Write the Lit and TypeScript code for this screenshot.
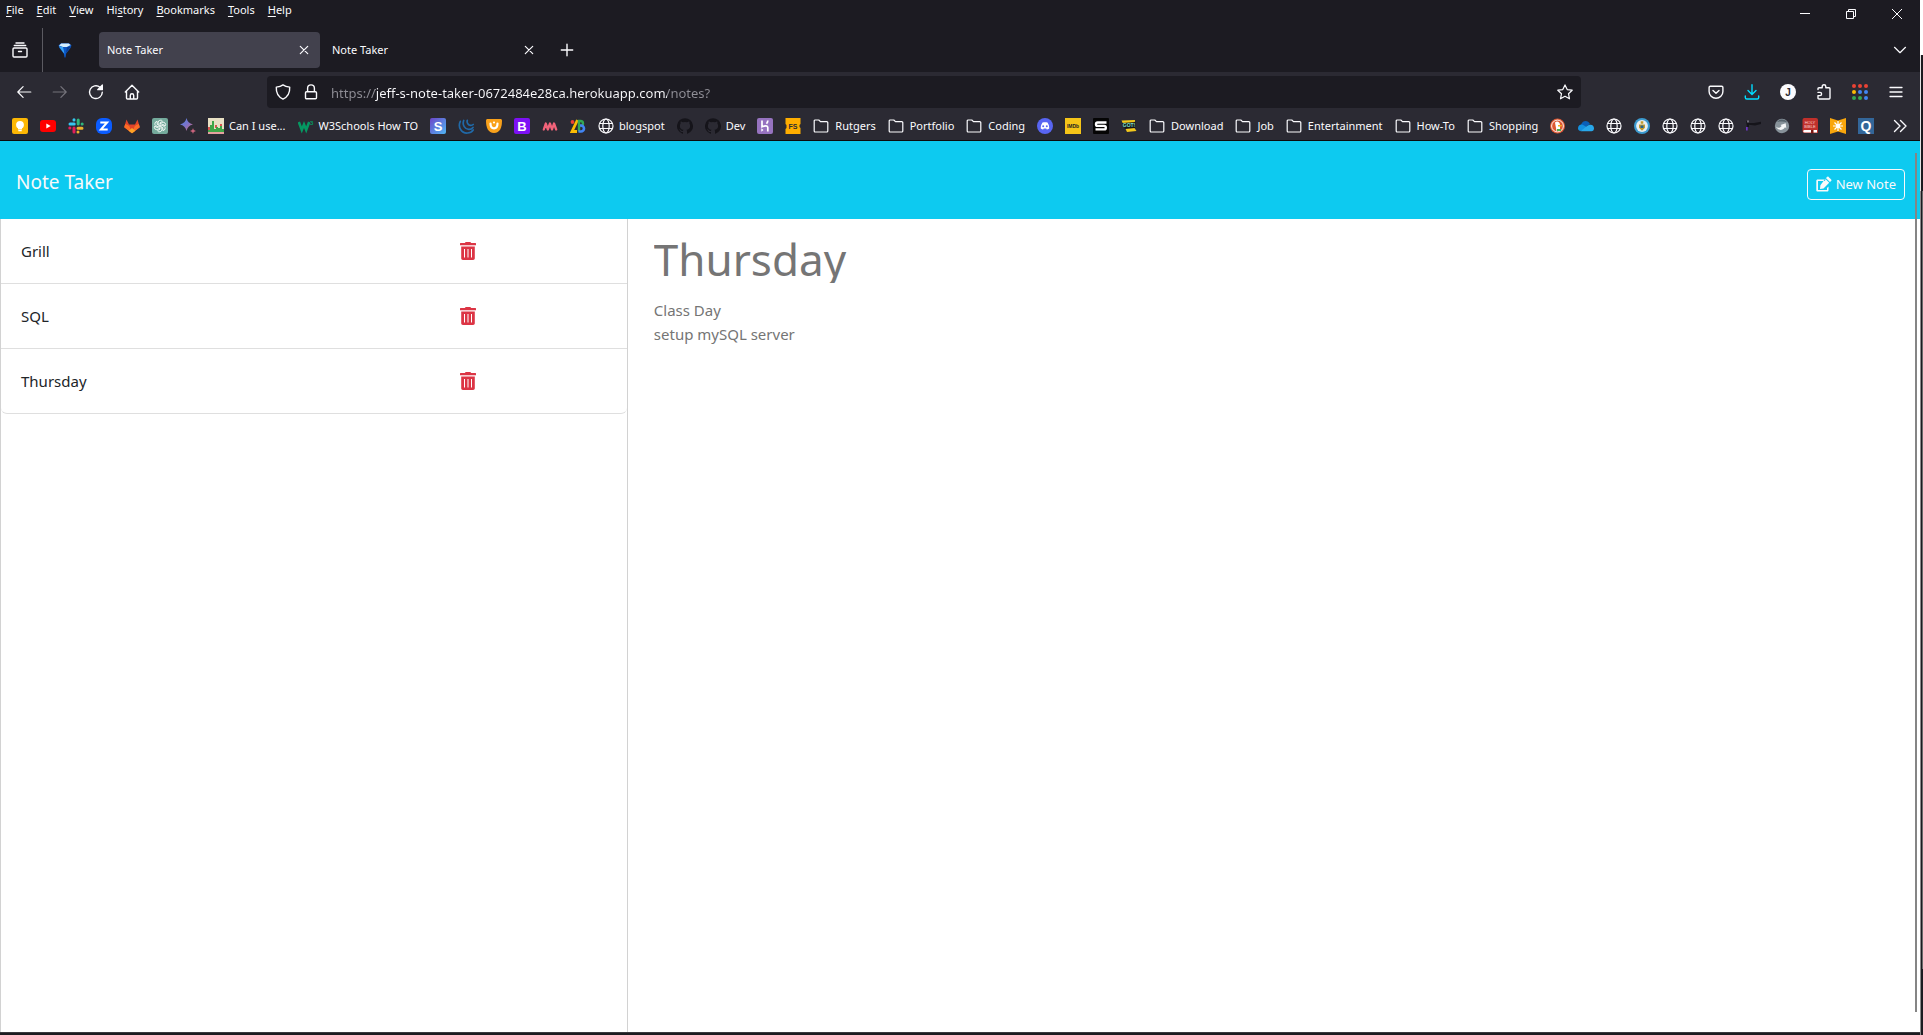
import { LitElement, html, svg, css, nothing, type TemplateResult } from "lit";
import { customElement, state } from "lit/decorators.js";

/** Glyphs on a 16 by 16 grid. Stroked shapes inherit the text colour. */
const line = (body: TemplateResult) =>
  svg`<g fill="none" stroke="currentColor" stroke-width="1.2" stroke-linecap="round" stroke-linejoin="round">${body}</g>`;

const mark = (label: string, size: number, fill: string, y = 12, weight = 700) =>
  svg`<text x="8" y=${y} text-anchor="middle" font-size=${size} font-weight=${weight} fill=${fill}>${label}</text>`;

const github = svg`<path fill="#15141a" d="M8 .2a8 8 0 0 0-2.500 15.600c.4.100.5-.2.500-.4v-1.400c-2.200.5-2.700-1-2.700-1-.4-.9-.9-1.200-.9-1.200-.7-.5.100-.5.100-.5.800.100 1.200.8 1.200.8.7 1.200 1.900.9 2.300.7.100-.5.300-.9.500-1.100-1.800-.2-3.600-.9-3.600-4 0-.9.300-1.600.8-2.100-.1-.2-.4-1 .1-2.100 0 0 .7-.2 2.200.8a7.500 7.500 0 0 1 4 0c1.500-1 2.200-.8 2.200-.8.5 1.100.2 1.900.1 2.100.5.600.8 1.300.8 2.100 0 3.100-1.900 3.800-3.700 4 .3.200.6.700.6 1.500v2.200c0 .2.100.500.500.400A8 8 0 0 0 8 .2z"/>`;

const icons: Record<string, TemplateResult> = {
  archive: line(svg`<path d="M4 1h8M2.300 3.500h11.400M2 6h12a1 1 0 0 1 1 1v7a1 1 0 0 1-1 1H2a1 1 0 0 1-1-1V7a1 1 0 0 1 1-1zM6.500 9.500h3" stroke-width="1.400"/>`),
  gem: svg`<path fill="#0b56c4" d="M1.500 3.500 4 1.300h8l2.500 2.200L13.500 6 9.200 11.500 8.500 15.500h-1L6.800 11.500 2.500 6z"/><path fill="#d5efff" d="M2 3.500 4.300 1.500h7.400l2 1.500L10 5H6z"/><path fill="#3ba6f5" d="M1.800 4.200 6 5l1.500 7L3 6z"/><path fill="#0a3d94" d="m10 5 3.800-.6L9 11z"/>`,
  close: line(svg`<path d="m4.300 4.300 7.400 7.400m0-7.400-7.400 7.400"/>`),
  plus: line(svg`<path d="M8 2.300v11.400M2.300 8h11.400" stroke-width="1.400"/>`),
  chevron: line(svg`<path d="m2.500 5.300 5.500 5.400 5.500-5.400"/>`),
  back: line(svg`<path d="M14.800 8H1.800m5.300-5.300L1.800 8l5.300 5.300"/>`),
  forward: line(svg`<path d="M1.200 8h13M8.900 2.700 14.200 8l-5.300 5.300"/>`),
  reload: line(svg`<path d="M14.300 8.300A6.400 6.400 0 1 1 12 3.200l2 1.800" stroke-width="1.400"/><path fill="currentColor" d="M14.400 1v4.700H9.700z"/>`),
  home: line(svg`<path d="M1.300 8 8 1.300 14.700 8M2.500 7v7a1 1 0 0 0 1 1h9a1 1 0 0 0 1-1V7M6.300 15v-3.500a1.700 1.700 0 0 1 3.400 0V15" stroke-width="1.400"/>`),
  shield: line(svg`<path d="M8 .9c2 1.500 4.300 2 6.700 2.200.3 5-1.700 9.600-6.700 12-5-2.400-7-7-6.700-12C3.700 2.900 6 2.400 8 .9z" stroke-width="1.400"/>`),
  lock: line(svg`<path d="M3.500 7.800h9a1 1 0 0 1 1 1v5a1 1 0 0 1-1 1h-9a1 1 0 0 1-1-1v-5a1 1 0 0 1 1-1zM4.600 7.500V4.300a3.400 3.400 0 0 1 6.800 0v3.200" stroke-width="1.400"/>`),
  star: line(svg`<path d="m8 .9 2.200 4.700 5 .6-3.700 3.500 1 5.100L8 12.300l-4.500 2.500 1-5.100L.8 6.200l5-.6z"/>`),
  pocket: line(svg`<path d="M2.300 2.200h11.400c.7 0 1.200.5 1.200 1.200v4a6.900 6.900 0 0 1-13.800 0v-4c0-.7.500-1.200 1.200-1.200zM5 6.500l3 2.800 3-2.800" stroke-width="1.400"/>`),
  download: svg`<g fill="none" stroke="#00ddff" stroke-width="1.400" stroke-linecap="round" stroke-linejoin="round"><path d="M8 .8v9.600M4 6.600l4 4 4-4M1.300 12v1.500c0 .8.700 1.500 1.500 1.500h10.400c.8 0 1.500-.7 1.500-1.500V12"/></g>`,
  account: svg`<circle cx="8" cy="8" r="8" fill="#fbfbfe"/>${mark("J", 10, "#2b2a33", 11.5)}`,
  puzzle: line(svg`<path d="M2 5.500V4.700c0-.6.400-1 1-1h3.200V2.500a1.800 1.800 0 0 1 3.600 0v1.200H13c.6 0 1 .4 1 1V14c0 .6-.4 1-1 1H3c-.6 0-1-.4-1-1v-2.400h2a1.600 1.600 0 0 0 0-3.200H2" stroke-width="1.400"/>`),
  apps: svg`${[
    ["#ea4335", "#ea4335", "#ea4335"],
    ["#fbbc04", "#4285f4", "#4285f4"],
    ["#34a853", "#34a853", "#4285f4"],
  ].map((row, r) => row.map((c, i) => svg`<circle cx=${2 + i * 6} cy=${2 + r * 6} r="2" fill=${c}/>`))}`,
  menu: line(svg`<path d="M2 3.500h12M2 8h12M2 12.500h12" stroke-width="1.300"/>`),
  minimize: svg`<path fill="currentColor" d="M3 7h10v1H3z"/>`,
  restore: svg`<path fill="none" stroke="currentColor" d="M3.500 5.500h7v7h-7zM5.500 5.500v-2h7v7h-2"/>`,
  exit: svg`<path fill="none" stroke="currentColor" d="m3 3 10 10M13 3 3 13"/>`,
  more: line(svg`<path d="m2.500 2.500 5.500 5.500-5.500 5.500M8.500 2.500 14 8l-5.500 5.500" stroke-width="1.400"/>`),
  folder: line(svg`<path d="M1.200 13V3a1 1 0 0 1 1-1h3.600l1.700 1.700h6.300a1 1 0 0 1 1 1V13a1 1 0 0 1-1 1H2.200a1 1 0 0 1-1-1z"/>`),
  globe: line(svg`<circle cx="8" cy="8" r="7"/><ellipse cx="8" cy="8" rx="3.200" ry="7"/><path d="M1.600 5.500h12.800M1.600 10.500h12.800"/>`),

  keep: svg`<rect width="16" height="16" rx="2" fill="#fbb704"/><circle cx="8" cy="6.800" r="3.900" fill="#fff"/><path fill="#fff" d="M6 10h4v1.500H6zM6.300 12h3.400v1.200H6.300z"/>`,
  youtube: svg`<rect y="2" width="16" height="12" rx="3" fill="#f00"/><path fill="#fff" d="m6.300 5.500 4.400 2.500-4.400 2.500z"/>`,
  slack: svg`<g stroke-width="3" stroke-linecap="round"><path stroke="#36c5f0" d="M6 1.700v.2M2 6h4.200"/><path stroke="#2eb67d" d="M10.200 2v4M14.100 6h.1"/><path stroke="#ecb22e" d="M10 10.200h4M10 14v.1"/><path stroke="#e01e5a" d="M6 10v4M1.800 10h.1"/></g>`,
  zoom: svg`<rect width="16" height="16" rx="6" fill="#0b5cff"/><path fill="none" stroke="#fff" stroke-width="2" d="M4.300 4.500h6.800L4.900 11.500h6.800"/>`,
  gitlab: svg`<path fill="#e24329" d="m8 15.300 7.800-6L13.500 1.500 11 6.500H5L2.500 1.500.2 9.300z"/><path fill="#fc6d26" d="m8 15.300 7.800-6-1-3.300c-1.800.4-3.300 1.300-4.300 2.500L8 15.300 5.500 8.500C4.500 7.300 3 6.400 1.200 6l-1 3.300z"/><path fill="#fca326" d="m8 15.300 3.400-2.600L8 10l-3.400 2.700z"/>`,
  gpt: svg`<rect width="16" height="16" rx="2" fill="#74aa9c"/><g fill="none" stroke="#fff" stroke-width=".8">${[0, 60, 120, 180, 240, 300].map(
    (a) => svg`<path transform=${`rotate(${a} 8 8)`} d="M6.200 7V4.300a2.300 2.300 0 0 1 4.300-1L8 4.800v3"/>`
  )}</g>`,
  gemini: svg`<defs><linearGradient id="gm" x2="1" y2="1"><stop stop-color="#4a86e8"/><stop offset=".5" stop-color="#7b72c9"/><stop offset="1" stop-color="#d96570"/></linearGradient></defs><path fill="url(#gm)" d="M6.500 0c.9 3.700 2.800 5.600 6.500 6.500-3.700.9-5.600 2.800-6.500 6.500C5.600 9.300 3.700 7.400 0 6.500 3.700 5.600 5.600 3.700 6.500 0z"/><path fill="#c9637c" d="M13 10c.4 1.800 1.200 2.600 3 3-1.800.4-2.600 1.200-3 3-.4-1.800-1.200-2.600-3-3 1.800-.4 2.600-1.200 3-3z"/>`,
  caniuse: svg`<rect width="16" height="16" fill="#e8e0c4"/><path fill="#d9534f" d="M0 9h2v4H0zM7 7h2v3H7zM12 6h2v4h-2z"/><path fill="#3fa548" d="M0 12h2V7h2V3h2v8h2V9h2v1h2V8h2v3h2v3H0z"/><path fill="#e6a0a0" d="M0 14h16v2H0z"/>`,
  w3: svg`<path fill="none" stroke="#059862" stroke-width="2.600" d="m.8 4 3 8L6 6.500l2.200 5.500 3-8"/><text x="12" y="7" font-size="6" font-weight="700" fill="#059862">3</text>`,
  stackedit: svg`<defs><linearGradient id="se" x2="1" y2="1"><stop stop-color="#6c45c9"/><stop offset="1" stop-color="#4fb6f2"/></linearGradient></defs><rect width="16" height="16" rx="2" fill="url(#se)"/>${mark("S", 13, "#fff", 12.7)}`,
  jquery: svg`<g fill="none" stroke="#2069a8" stroke-width="1.700" stroke-linecap="round"><path d="M2.300 3.300C-.5 9 3.500 15.500 9.500 15c2.500-.1 4.500-1.300 5.700-3"/><path d="M5.700 2.500C4 7 7 11.500 11 11.300c1.900 0 3.200-.8 4-1.900"/><path d="M9.300 2.300c-.8 2.500 1 5 3.300 5.100 1.300.1 2-.3 2.600-.9"/></g>`,
  udacious: svg`<path fill="#f9a11b" d="M1.500 1h13c.8 0 1.500.7 1.500 1.500 0 7.500-2 12-8 12.500C2 14.500 0 10 0 2.500 0 1.700.7 1 1.500 1z"/><path fill="none" stroke="#fff" stroke-width="2.200" stroke-linecap="round" d="M4.500 5.500c0 6.500 7 6.500 7 0"/><circle cx="8" cy="4.500" r="1.100" fill="#fff"/>`,
  bootstrap: svg`<rect width="16" height="16" rx="2" fill="#7d11f5"/>${mark("B", 13, "#fff", 12.7, 600)}`,
  wave: svg`<path fill="none" stroke="#f2637a" stroke-width="2.300" stroke-linecap="round" stroke-linejoin="round" d="m1.800 11.500 2-6 2 6 2.200-6 2 6 2-6 2.200 6"/>`,
  zb: svg`<circle cx="2.500" cy="4" r="1.900" fill="#ea4335"/><path fill="none" stroke="#fbbc04" stroke-width="2.800" d="M7.500 2 2 13.500h5"/><path fill="none" stroke="#34a853" stroke-width="2.400" d="M9 13.500V3h1.500a2.300 2.300 0 0 1 0 5"/><path fill="none" stroke="#4285f4" stroke-width="2.600" d="M8.500 13.500H11a3 3 0 0 0 0-6h-1"/>`,
  github,
  heroku: svg`<rect width="16" height="16" rx="2" fill="#9673c0"/><path fill="none" stroke="#fff" stroke-width="1.700" d="M5 2.500v6.300c3-1.200 5.800-1.300 5.800.7v4M10.800 2.500c0 1.300-.4 2.200-1.300 3.200"/><path fill="#fff" d="m4.300 10.300 2.200 1.700-2.200 1.700z"/>`,
  fs: svg`<path fill="#ffae00" d="M.5 0h15v6l-1 1v2l1 1v6H.5v-5l1-1V7l-1-1z"/>${mark("FS", 7, "#2b2a33", 10.5)}`,
  discord: svg`<circle cx="8" cy="8" r="8" fill="#5865f2"/><path fill="#fff" d="M5.500 4.500c1.600-.5 3.400-.5 5 0 1.200 1.800 1.900 3.800 1.700 6-.8.600-1.600.9-2.400 1l-.6-1H6.800l-.6 1c-.8-.1-1.600-.4-2.400-1-.2-2.200.5-4.200 1.700-6z"/><circle cx="6.200" cy="8.200" r="1" fill="#5865f2"/><circle cx="9.800" cy="8.200" r="1" fill="#5865f2"/>`,
  imdb: svg`<rect width="16" height="16" fill="#f5c518"/>${mark("IMDb", 5, "#222", 10, 800)}`,
  sblack: svg`<rect width="16" height="16" rx="1" fill="#050505"/><path fill="none" stroke="#fff" stroke-width="2.400" d="M13.500 4.500h-9c-2 0-2 3.400 0 3.400h6.800c2 0 2 3.500 0 3.500H2.500"/>`,
  got: svg`<path fill="#f2c81c" d="m.5 2.500 13.500-.5-.5 8 2 3L6 14z"/><path fill="#15141a" d="m1 5 13.500-1-.5 6-10 1z"/>${mark("GOT!", 5, "#7fe0c8", 9)}`,
  ddg: svg`<circle cx="7.500" cy="8" r="7.500" fill="#de5833"/><circle cx="7.500" cy="8" r="5.900" fill="none" stroke="#fff" stroke-width=".9"/><path fill="#fff" d="M5 4.500c2-2 5-.5 5 2.500v6H6.500z"/><path fill="#f9b21b" d="M8 7h4l-.5 1.500H8z"/><path fill="#4caf50" d="M7 11h4v2H7z"/>`,
  onedrive: svg`<path fill="#0a5fb8" d="M3 6.500C5 2 10 2 12 6l-6 4z"/><path fill="#1490df" d="M0 10.500c0-3.500 3.500-5 6-3l7 4-11 1.500C.8 12.500 0 11.500 0 10.500z"/><path fill="#28a8ea" d="M2.500 13.300 9 8c4-2.800 7-.5 7 2.300 0 1.800-1 3-2.500 3z"/>`,
  seal: svg`<circle cx="8" cy="8" r="8" fill="#3c9bd0"/><circle cx="8" cy="8" r="5.900" fill="#e9eef0"/><path fill="#c39a2b" d="M5 6.500h6v3.300L8 12.800 5 9.800zM6.700 3.200h2.600v2.600H6.700z"/><path fill="#28648d" d="M6.500 7.500h3V10h-3z"/>`,
  streak: svg`<path fill="#15141a" d="M0 3h3v2h5l7-1.200V6L9 7.500 3 6.800V9H1z"/><path fill="#6d35c7" d="M0 9h1.700v3.500H0z"/><path fill="#c9c6d8" d="M1.500 2.500h1v2h-1z"/>`,
  swirl: svg`<circle cx="8" cy="8" r="7.200" fill="#87929a"/><path fill="#f5f7f8" d="M1.800 8.500c2 2 4.300 1.700 5.800-.5L6.500 7l5.200-1.700.6 5-1.300-1C8.500 13 4 12.800 1.800 8.500z"/><path fill="#56636c" d="M3 4c3-3.500 8-3 10.500.5C10 3 6 3.500 3 4z"/>`,
  bible: svg`<path fill="#c0302b" d="M2 0h12a2 2 0 0 1 2 2v13H2.500A2 2 0 0 1 .5 13V2A2 2 0 0 1 2 0z"/><path fill="#fff" d="M2.500 12H15v2.600H2.500a1.300 1.300 0 0 1 0-2.600z"/><path fill="#7b1712" d="M9 12h2.500v4L10.200 15 9 16z"/><text x="8" y="5.500" text-anchor="middle" font-size="4" fill="#fbd3d0">HOLY</text><text x="8" y="9.500" text-anchor="middle" font-size="4" fill="#fbd3d0">BIBLE</text>`,
  sun: svg`<path fill="#f9a60c" d="m0 0 8 2.500L16 0v16l-8-2.500L0 16z"/><path stroke="#fff" stroke-width="1.200" d="M8 3v10M3 8h10M4.500 4.500l7 7M11.500 4.500l-7 7"/><circle cx="8" cy="8" r="2" fill="#fff"/>`,
  quiz: svg`<rect width="16" height="16" fill="#336699"/>${mark("Q", 14, "#fff", 12.6)}`,
  edit: svg`<path fill="currentColor" d="M12.500 10.500 11 12v2H2V5h6.500L10 3.500H1.700C.9 3.500.3 4.100.3 4.900v9.300c0 .8.600 1.400 1.400 1.400h9.400c.8 0 1.400-.6 1.400-1.400zM12.600.9l2.600 2.600c.4.400.4 1 0 1.400l-1.300 1.200-4-4 1.300-1.200c.4-.4 1-.4 1.400 0zM9.200 2.800l4 4-5.700 5.600-3.500.5.400-3.700z"/>`,
};

const trash = html`<svg class="trash" viewBox="0 0 16 18" aria-hidden="true"><path fill="currentColor" fill-rule="evenodd" d="M.5 1h4.300L5.700 0h4.600l.9 1h4.300c.3 0 .5.200.5.500v1.700H0V1.500C0 1.200.2 1 .5 1zM1.200 4.600h13.600v11.700c0 .9-.8 1.700-1.700 1.700H2.900c-.9 0-1.700-.8-1.700-1.700zM4 7v8.500h1V7zM7.500 7v8.500h1V7zM11 7v8.500h1V7z"/></svg>`;

const icon = (name: string) =>
  html`<svg class="icon" viewBox="0 0 16 16" aria-hidden="true">${icons[name]}</svg>`;

interface Bookmark {
  icon: string;
  label?: string;
}

interface Note {
  title: string;
  text: string;
}

const MENUS: [string, string, string][] = [
  ["", "F", "ile"],
  ["", "E", "dit"],
  ["", "V", "iew"],
  ["Hi", "s", "tory"],
  ["", "B", "ookmarks"],
  ["", "T", "ools"],
  ["", "H", "elp"],
];

const BOOKMARKS: Bookmark[] = [
  { icon: "keep" },
  { icon: "youtube" },
  { icon: "slack" },
  { icon: "zoom" },
  { icon: "gitlab" },
  { icon: "gpt" },
  { icon: "gemini" },
  { icon: "caniuse", label: "Can I use..." },
  { icon: "w3", label: "W3Schools How TO" },
  { icon: "stackedit" },
  { icon: "jquery" },
  { icon: "udacious" },
  { icon: "bootstrap" },
  { icon: "wave" },
  { icon: "zb" },
  { icon: "globe", label: "blogspot" },
  { icon: "github" },
  { icon: "github", label: "Dev" },
  { icon: "heroku" },
  { icon: "fs" },
  { icon: "folder", label: "Rutgers" },
  { icon: "folder", label: "Portfolio" },
  { icon: "folder", label: "Coding" },
  { icon: "discord" },
  { icon: "imdb" },
  { icon: "sblack" },
  { icon: "got" },
  { icon: "folder", label: "Download" },
  { icon: "folder", label: "Job" },
  { icon: "folder", label: "Entertainment" },
  { icon: "folder", label: "How-To" },
  { icon: "folder", label: "Shopping" },
  { icon: "ddg" },
  { icon: "onedrive" },
  { icon: "globe" },
  { icon: "seal" },
  { icon: "globe" },
  { icon: "globe" },
  { icon: "globe" },
  { icon: "streak" },
  { icon: "swirl" },
  { icon: "bible" },
  { icon: "sun" },
  { icon: "quiz" },
];

const base = css`
  * {
    box-sizing: border-box;
  }
  button,
  input,
  textarea {
    margin: 0;
    padding: 0;
    border: 0;
    background: none;
    color: inherit;
    font: inherit;
  }
  button {
    display: flex;
    align-items: center;
    justify-content: center;
    cursor: pointer;
  }
  .icon {
    display: block;
    flex: none;
    width: 16px;
    height: 16px;
    font-family: "Liberation Sans", sans-serif;
  }
`;

@customElement("browser-chrome")
export class BrowserChrome extends LitElement {
  static styles = [
    base,
    css`
      :host {
        display: block;
        background: #2b2a33;
        border-bottom: 1px solid #0c0c0d;
        color: #fbfbfe;
        font: 11px/16px "Noto Sans", sans-serif;
      }
      .top {
        display: flex;
        justify-content: space-between;
        height: 28px;
        background: #1c1b22;
      }
      .menus {
        display: flex;
        gap: 13px;
        padding: 2px 6px;
        align-items: flex-start;
      }
      .menus u {
        text-underline-offset: 2px;
      }
      .window {
        display: flex;
      }
      .window button {
        width: 46px;
      }
      .tabs {
        display: flex;
        align-items: center;
        height: 44px;
        background: #1c1b22;
      }
      .view {
        width: 43px;
        height: 44px;
        border-right: 1px solid #5b5a61;
        padding-right: 2px;
      }
      .pinned {
        width: 44px;
        margin-right: 12px;
      }
      .tab {
        display: flex;
        align-items: center;
        justify-content: space-between;
        width: 221px;
        height: 36px;
        margin-right: 4px;
        padding: 0 8px;
        border-radius: 4px;
      }
      .active {
        background: #42414d;
      }
      .new {
        width: 32px;
        margin-left: 2px;
      }
      .all {
        margin-left: auto;
        width: 40px;
      }
      .nav {
        display: flex;
        align-items: center;
        height: 40px;
        padding: 0 6px;
      }
      .nav button {
        width: 36px;
        height: 32px;
      }
      .moves {
        display: flex;
        flex: none;
        width: 251px;
      }
      .moves .dim {
        color: #74737b;
      }
      .address {
        display: flex;
        align-items: center;
        flex: 1;
        height: 32px;
        margin: 0 117px 0 10px;
        padding: 0 8px;
        gap: 12px;
        border-radius: 4px;
        background: #1c1b22;
      }
      .address button {
        width: 16px;
      }
      .url {
        flex: 1;
        min-width: 0;
        height: 24px;
        padding-top: 2px;
        font-size: 13px;
        color: transparent;
        background: linear-gradient(90deg, #8f8e96 44px, #fbfbfe 44px, #fbfbfe 336px, #8f8e96 336px);
        -webkit-background-clip: text;
        background-clip: text;
      }
      .tools {
        display: flex;
        flex: none;
      }
      .bookmarks {
        display: flex;
        align-items: center;
        height: 28px;
        padding: 0 12px;
      }
      .bookmarks a {
        display: flex;
        align-items: center;
        gap: 5px;
        margin-right: 12px;
        color: inherit;
        text-decoration: none;
        white-space: nowrap;
      }
      .bookmarks .folder {
        gap: 6px;
      }
      .more {
        margin-left: auto;
      }
    `,
  ];

  render() {
    return html`
      <div class="top">
        <nav class="menus" aria-label="Menu bar">
          ${MENUS.map(([a, b, c]) => html`<button><span>${a}<u>${b}</u>${c}</span></button>`)}
        </nav>
        <div class="window">
          <button aria-label="Minimize">${icon("minimize")}</button>
          <button aria-label="Restore">${icon("restore")}</button>
          <button aria-label="Close window">${icon("exit")}</button>
        </div>
      </div>
      <div class="tabs">
        <button class="view" aria-label="View">${icon("archive")}</button>
        <button class="pinned" aria-label="Pinned tab">${icon("gem")}</button>
        <div class="tab active">
          <span>Note Taker</span><button aria-label="Close tab">${icon("close")}</button>
        </div>
        <div class="tab">
          <span>Note Taker</span><button aria-label="Close tab">${icon("close")}</button>
        </div>
        <button class="new" aria-label="New tab">${icon("plus")}</button>
        <button class="all" aria-label="List all tabs">${icon("chevron")}</button>
      </div>
      <div class="nav">
        <div class="moves">
          <button aria-label="Back">${icon("back")}</button>
          <button class="dim" aria-label="Forward">${icon("forward")}</button>
          <button aria-label="Reload">${icon("reload")}</button>
          <button aria-label="Home">${icon("home")}</button>
        </div>
        <div class="address">
          <button aria-label="Tracking protection">${icon("shield")}</button>
          <button aria-label="Site information">${icon("lock")}</button>
          <input
            class="url"
            aria-label="Address"
            .value=${"https://jeff-s-note-taker-0672484e28ca.herokuapp.com/notes?"}
          />
          <button aria-label="Bookmark this page">${icon("star")}</button>
        </div>
        <div class="tools">
          ${["pocket", "download", "account", "puzzle", "apps", "menu"].map(
            (name) => html`<button aria-label=${name}>${icon(name)}</button>`
          )}
        </div>
      </div>
      <nav class="bookmarks" aria-label="Bookmarks">
        ${BOOKMARKS.map(
          (b) => html`<a class=${b.icon} href="#" aria-label=${b.label ?? b.icon}>
            ${icon(b.icon)}${b.label ? html`<span>${b.label}</span>` : nothing}
          </a>`
        )}
        <button class="more" aria-label="More bookmarks">${icon("more")}</button>
      </nav>
    `;
  }
}

@customElement("note-taker")
export class NoteTaker extends LitElement {
  static styles = [
    base,
    css`
      :host {
        display: flex;
        flex-direction: column;
        position: relative;
        background: #fff;
        color: #212529;
        font: 15px/24px "Noto Sans", sans-serif;
      }
      .bar {
        display: flex;
        align-items: center;
        justify-content: space-between;
        height: 78px;
        padding: 4px 15px 0 16px;
        background: #0dcaf0;
        color: #f8f9fa;
      }
      .brand {
        color: inherit;
        font-size: 19px;
        text-decoration: none;
      }
      .add {
        gap: 4px;
        height: 31px;
        margin-top: 4px;
        padding: 0 8px;
        border: 1px solid #f8f9fa;
        border-radius: 4px;
        font-size: 13px;
      }
      .body {
        display: grid;
        grid-template-columns: 32.7% 1fr;
        flex: 1;
      }
      .list {
        margin: 0;
        padding: 0;
        border: solid #d2d2d2;
        border-width: 0 1px;
        list-style: none;
      }
      .item {
        display: grid;
        grid-template-columns: 3fr 1fr;
        align-items: center;
        height: 65px;
        padding: 0 20px;
        border-bottom: 1px solid #dfdfdf;
      }
      .item:last-child {
        border-radius: 0 0 6px 6px;
      }
      .name {
        justify-self: start;
      }
      .remove {
        justify-self: start;
        color: #dc3545;
      }
      .trash {
        display: block;
        width: 16px;
        height: 18px;
      }
      .note {
        display: flex;
        flex-direction: column;
        gap: 15px;
        padding: 16px 24px 0 26px;
        color: #757575;
      }
      .title {
        height: 48px;
        font-size: 44px;
        line-height: 48px;
      }
      .text {
        min-height: 240px;
        resize: none;
      }
      .thumb {
        position: absolute;
        top: 12px;
        right: 3px;
        bottom: 20px;
        width: 2px;
        background: #858585;
      }
    `,
  ];

  @state() private notes: Note[] = [
    { title: "Grill", text: "" },
    { title: "SQL", text: "" },
    { title: "Thursday", text: "Class Day\nsetup mySQL server" },
  ];

  @state() private current = 2;

  render() {
    const note = this.notes[this.current];
    return html`
      <header class="bar">
        <a class="brand" href="#">Note Taker</a>
        <button class="add">${icon("edit")}<span>New Note</span></button>
      </header>
      <main class="body">
        <ul class="list">
          ${this.notes.map(
            (n, i) => html`<li class="item">
              <button class="name" @click=${() => (this.current = i)}>${n.title}</button>
              <button class="remove" aria-label="Delete ${n.title}">${trash}</button>
            </li>`
          )}
        </ul>
        <section class="note">
          <input class="title" aria-label="Note title" readonly .value=${note.title} />
          <textarea class="text" aria-label="Note text" readonly .value=${note.text}></textarea>
        </section>
      </main>
      <div class="thumb"></div>
    `;
  }
}

@customElement("app-root")
export class AppRoot extends LitElement {
  static styles = css`
    :host {
      display: grid;
      grid-template-columns: 1fr 3px;
      min-height: 100vh;
      background: #1c1b20;
    }
    .window {
      display: flex;
      flex-direction: column;
      min-width: 0;
      border-bottom: 1px solid #39383d;
      margin-bottom: 2px;
    }
    .page {
      flex: 1;
    }
    .edge {
      display: flex;
      flex-direction: column;
      border-left: 1px solid #8a8a8a;
      background: #1c1b20;
    }
    .light {
      height: 55px;
      margin-left: -1px;
      background: #fff;
    }
    .dark {
      height: 136px;
      margin-left: -1px;
      border-left: 1px solid #e4e4e4;
    }
    .rest {
      flex: 1;
      border-right: 1px solid #6a6a6a;
    }
    .foot {
      height: 66px;
    }
  `;

  render() {
    return html`
      <div class="window">
        <browser-chrome></browser-chrome>
        <note-taker class="page"></note-taker>
      </div>
      <div class="edge">
        <div class="light"></div>
        <div class="dark"></div>
        <div class="rest"></div>
        <div class="foot"></div>
      </div>
    `;
  }
}
